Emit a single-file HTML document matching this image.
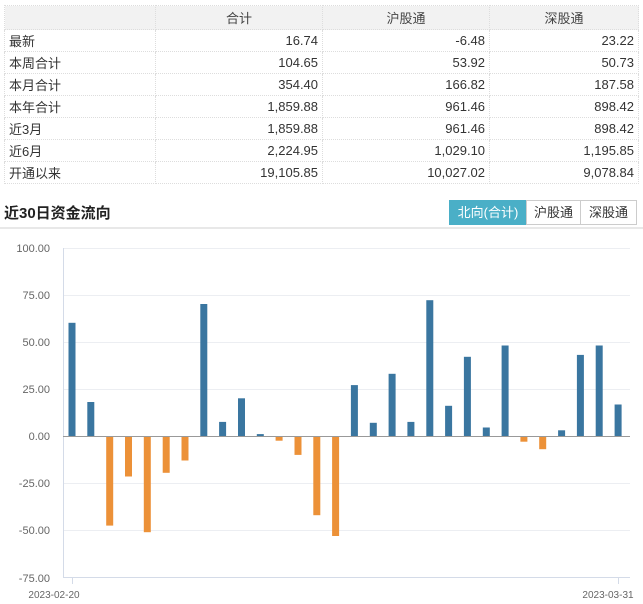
<!DOCTYPE html>
<html><head><meta charset="utf-8"><style>
body{margin:0;width:643px;height:604px;background:#fff;font-family:"Liberation Sans","Noto Sans CJK SC",sans-serif;color:#333;position:relative;overflow:hidden}
table{position:absolute;left:4px;top:5px;width:635px;border-collapse:collapse;font-size:13px}
td,th{border:1px dotted #ddd;height:21px;padding:0 4px;font-weight:normal}
th{background:#f2f2f2;height:23px;color:#444}
td{text-align:right}
td:first-child{text-align:left}
.title{position:absolute;left:4px;top:202px;font-size:15px;font-weight:bold;color:#222}
.btns{position:absolute;left:449px;top:200px;font-size:13px}
.btns div{position:absolute;top:0;border:1px solid #ccc;height:23px;line-height:23px;text-align:center;background:#fff;color:#333;box-sizing:border-box;height:25px}
.btns .a{background:#4aafc7;color:#fff;border-color:#4aafc7}
.line{position:absolute;left:0;top:227px;width:643px;height:2px;background:#e8e8e8}
</style></head><body>
<table>
<tr><th style="width:142px"></th><th>合计</th><th>沪股通</th><th>深股通</th></tr>
<tr><td>最新</td><td>16.74</td><td>-6.48</td><td>23.22</td></tr>
<tr><td>本周合计</td><td>104.65</td><td>53.92</td><td>50.73</td></tr>
<tr><td>本月合计</td><td>354.40</td><td>166.82</td><td>187.58</td></tr>
<tr><td>本年合计</td><td>1,859.88</td><td>961.46</td><td>898.42</td></tr>
<tr><td>近3月</td><td>1,859.88</td><td>961.46</td><td>898.42</td></tr>
<tr><td>近6月</td><td>2,224.95</td><td>1,029.10</td><td>1,195.85</td></tr>
<tr><td>开通以来</td><td>19,105.85</td><td>10,027.02</td><td>9,078.84</td></tr>
</table>
<div class="title">近30日资金流向</div>
<div class="btns"><div class="a" style="left:0;width:78px">北向(合计)</div><div style="left:77px;width:55px">沪股通</div><div style="left:131px;width:57px">深股通</div></div>
<div class="line"></div>
<svg width="643" height="604" style="position:absolute;left:0;top:0" font-family="Liberation Sans, sans-serif">
<g stroke="#eceef2" stroke-width="1">
<line x1="63" x2="630" y1="248.5" y2="248.5"/><line x1="63" x2="630" y1="295.5" y2="295.5"/><line x1="63" x2="630" y1="342.5" y2="342.5"/><line x1="63" x2="630" y1="389.5" y2="389.5"/><line x1="63" x2="630" y1="483.5" y2="483.5"/><line x1="63" x2="630" y1="530.5" y2="530.5"/>
</g>
<line x1="63" x2="630" y1="577.5" y2="577.5" stroke="#d4dbe8"/>
<line x1="63.5" x2="63.5" y1="248" y2="578" stroke="#d4dbe8"/>
<line x1="72.5" x2="72.5" y1="578" y2="584" stroke="#d4dbe8"/>
<line x1="618.5" x2="618.5" y1="578" y2="584" stroke="#d4dbe8"/>
<g font-size="11" fill="#666" text-anchor="end">
<text x="50" y="252">100.00</text><text x="50" y="299">75.00</text><text x="50" y="346">50.00</text><text x="50" y="393">25.00</text><text x="50" y="440">0.00</text><text x="50" y="487">-25.00</text><text x="50" y="534">-50.00</text><text x="50" y="582">-75.00</text>
</g>
<g font-size="10" fill="#666" text-anchor="middle"><text x="54" y="598">2023-02-20</text><text x="608" y="598">2023-03-31</text></g>
<g fill="#3a76a0">
<rect x="68.5" y="322.8" width="7" height="113.2"/><rect x="87.3" y="402" width="7" height="34"/>
<rect x="200.3" y="304" width="7" height="132"/><rect x="219.1" y="421.9" width="7" height="14.1"/><rect x="238" y="398.3" width="7" height="37.7"/><rect x="256.8" y="434.1" width="7" height="1.9"/>
<rect x="350.9" y="385.1" width="7" height="50.9"/><rect x="369.8" y="422.8" width="7" height="13.2"/><rect x="388.6" y="373.8" width="7" height="62.2"/><rect x="407.4" y="421.9" width="7" height="14.1"/><rect x="426.3" y="300.2" width="7" height="135.8"/><rect x="445.1" y="405.8" width="7" height="30.2"/><rect x="463.9" y="356.8" width="7" height="79.2"/><rect x="482.8" y="427.5" width="7" height="8.5"/><rect x="501.6" y="345.5" width="7" height="90.5"/>
<rect x="558.1" y="430.3" width="7" height="5.7"/><rect x="576.9" y="354.9" width="7" height="81.1"/><rect x="595.7" y="345.5" width="7" height="90.5"/><rect x="614.6" y="404.5" width="7" height="31.5"/>
</g>
<g fill="#ec9138">
<rect x="106.2" y="436" width="7" height="89.6"/><rect x="125" y="436" width="7" height="40.5"/><rect x="143.8" y="436" width="7" height="96.2"/><rect x="162.7" y="436" width="7" height="36.8"/><rect x="181.5" y="436" width="7" height="24.5"/>
<rect x="275.6" y="436" width="7" height="4.7"/><rect x="294.5" y="436" width="7" height="18.9"/><rect x="313.3" y="436" width="7" height="79.2"/><rect x="332.1" y="436" width="7" height="100"/>
<rect x="520.4" y="436" width="7" height="5.7"/><rect x="539.2" y="436" width="7" height="13.2"/>
</g>
<line x1="63" x2="630" y1="436.5" y2="436.5" stroke="#999"/>
</svg>
</body></html>
